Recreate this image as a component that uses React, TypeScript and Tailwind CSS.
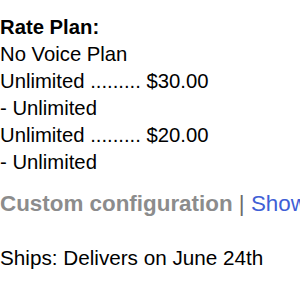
export default function App() {
  return (
    <div className="w-[300px] h-[300px] overflow-hidden bg-white pt-[14px] font-['Liberation_Sans',Arial,sans-serif] text-[20.3px] leading-[27px] text-black whitespace-nowrap">
      {/* rate plan */}
      <div className="font-bold">Rate Plan:</div>
      <div>No Voice Plan</div>
      <div>Unlimited ......... $30.00</div>
      <div>- Unlimited</div>
      <div>Unlimited ......... $20.00</div>
      <div>- Unlimited</div>

      {/* config links */}
      <div className="mt-[14px] text-[22.4px] font-bold text-[#8c8c8c]">
        Custom configuration <span className="font-normal text-[#6b6b6b]">|</span>{' '}
        <span className="font-normal text-[#3f5fd6]">Show details</span>
      </div>

      <div className="mt-[27px] text-[20.7px]">Ships: Delivers on June 24th</div>
    </div>
  );
}
